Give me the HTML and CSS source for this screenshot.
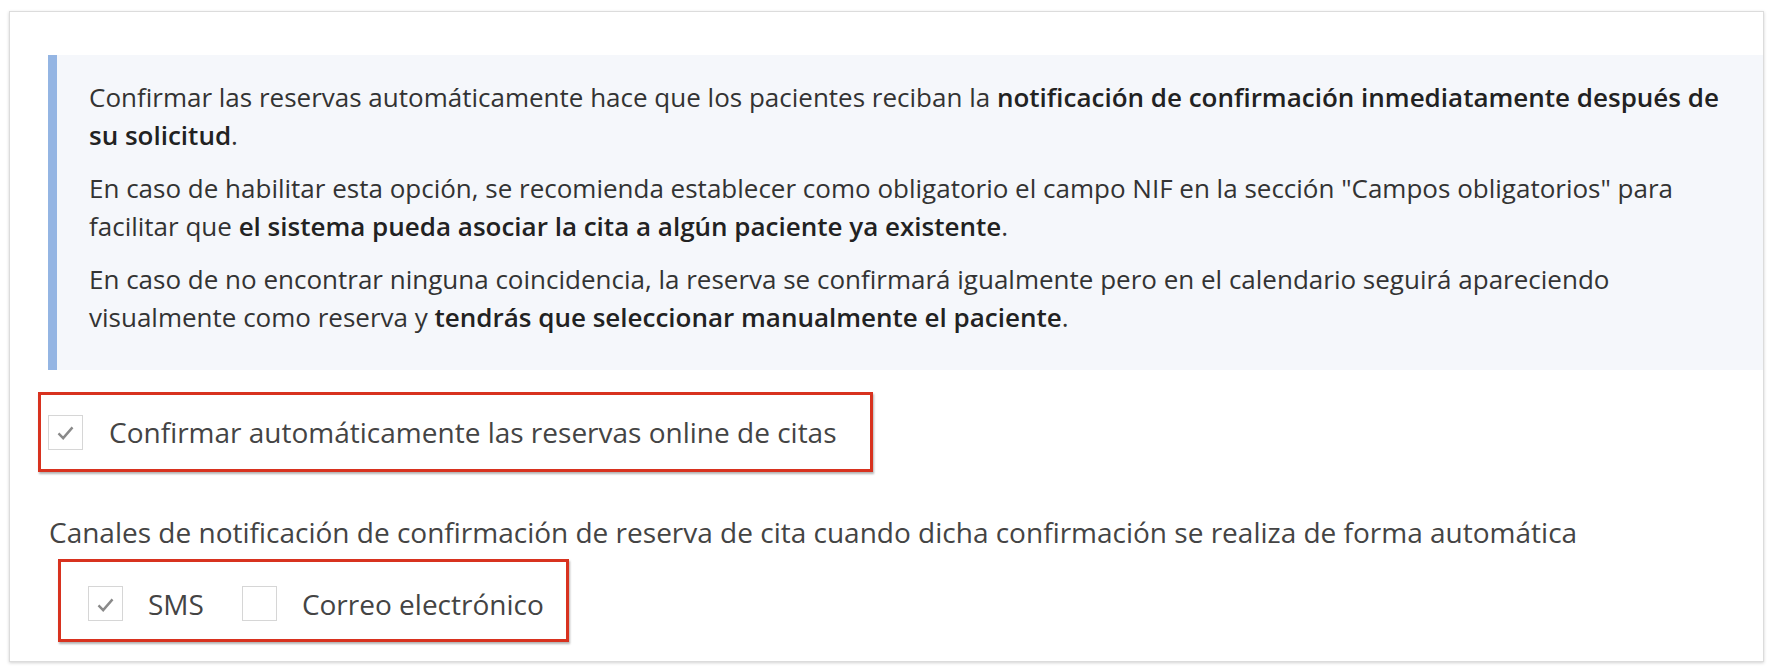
FILE: index.html
```html
<!DOCTYPE html>
<html lang="es">
<head>
    <meta charset="UTF-8">
    <meta name="viewport" content="width=device-width, initial-scale=1.0">
    <title>Reservas online</title>
    <link rel="stylesheet" href="styles.css">
</head>
<body>
    <div class="card">
        <div class="info">
            <p>Confirmar las reservas automáticamente hace que los pacientes reciban la <b>notificación de confirmación inmediatamente después de su solicitud</b>.</p>
            <p>En caso de habilitar esta opción, se recomienda establecer como obligatorio el campo NIF en la sección "Campos obligatorios" para facilitar que <b>el sistema pueda asociar la cita a algún paciente ya existente</b>.</p>
            <p>En caso de no encontrar ninguna coincidencia, la reserva se confirmará igualmente pero en el calendario seguirá apareciendo visualmente como reserva y <b>tendrás que seleccionar manualmente el paciente</b>.</p>
        </div>

        <div class="mark mark-auto">
            <label class="check">
                <span class="box checked"><svg viewBox="0 0 18 15"><path d="M1.5 8l5 5L16.5 1.5"/></svg></span>
                Confirmar automáticamente las reservas online de citas
            </label>
        </div>

        <p class="channels-title">Canales de notificación de confirmación de reserva de cita cuando dicha confirmación se realiza de forma automática</p>

        <div class="mark mark-channels">
            <label class="check">
                <span class="box checked"><svg viewBox="0 0 18 15"><path d="M1.5 8l5 5L16.5 1.5"/></svg></span>
                SMS
            </label>
            <label class="check">
                <span class="box"></span>
                Correo electrónico
            </label>
        </div>
    </div>
</body>
</html>
```

FILE: styles.css
```css
body { margin: 0; background: #fff; font-family: "Open Sans", "Noto Sans", sans-serif; color: #333; }
.card { margin: 11px 10px 10px 9px; border: 1px solid #dcdcdc; box-shadow: 0 1px 3px rgba(0, 0, 0, 0.18); padding: 43px 0 19px 38px; }

.info { background: #f5f7fb; border-left: 9px solid #94b5e3; padding: 23px 30px 19px 32px; font-size: 26px; line-height: 38px; color: #333; }
.info p { margin: 0 0 15px; }
.info b { font-weight: 600; color: #222; }

.mark { display: inline-flex; align-items: center; border: 3px solid #d8321f; box-shadow: 1px 2px 2px rgba(0, 0, 0, 0.3); box-sizing: border-box; }
.mark-auto { margin: 22px 0 0 -10px; height: 80px; padding: 0 33px 0 7px; }
.mark-channels { margin-left: 10px; height: 83px; padding: 6px 22px 0 27px; gap: 38px; }

.check { display: flex; align-items: center; gap: 26px; font-size: 28px; color: #444; }
.mark-channels .check { gap: 25px; }
.box { width: 35px; height: 35px; border: 1.5px solid #d6d6d6; box-sizing: border-box; display: flex; align-items: center; justify-content: center; background: #fff; }
.box svg { width: 17px; height: 14px; margin-top: 2px; fill: none; stroke: #8a8a8a; stroke-width: 2.6; }

.channels-title { margin: 41px 0 8px 1px; font-size: 28px; line-height: 38px; color: #444; }
```
